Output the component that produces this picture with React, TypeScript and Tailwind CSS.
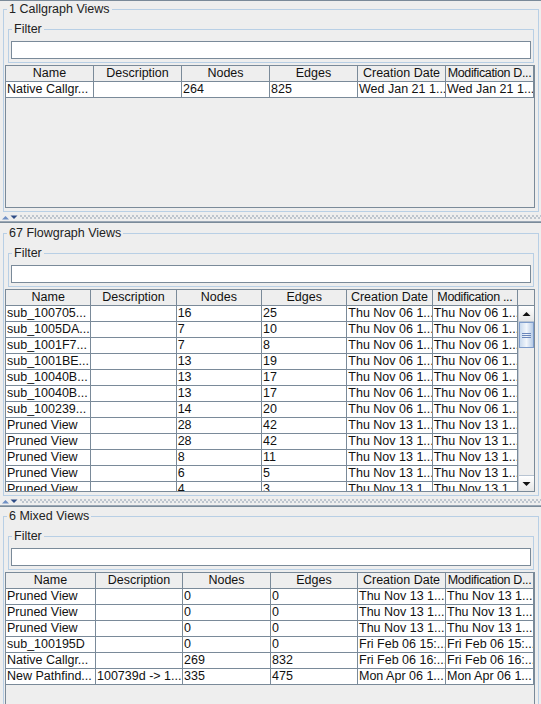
import React from "react";

type Row = string[];

const headers = ["Name", "Description", "Nodes", "Edges", "Creation Date", "Modification D..."];
const flowHeaders = ["Name", "Description", "Nodes", "Edges", "Creation Date", "Modification ..."];

const callgraphRows: Row[] = [
  ["Native Callgr...", "", "264", "825", "Wed Jan 21 1...", "Wed Jan 21 1..."],
];

const nov06 = "Thu Nov 06 1...";
const nov13 = "Thu Nov 13 1...";

const flowgraphRows: Row[] = [
  ["sub_100705...", "", "16", "25", nov06, nov06],
  ["sub_1005DA...", "", "7", "10", nov06, nov06],
  ["sub_1001F7...", "", "7", "8", nov06, nov06],
  ["sub_1001BE...", "", "13", "19", nov06, nov06],
  ["sub_10040B...", "", "13", "17", nov06, nov06],
  ["sub_10040B...", "", "13", "17", nov06, nov06],
  ["sub_100239...", "", "14", "20", nov06, nov06],
  ["Pruned View", "", "28", "42", nov13, nov13],
  ["Pruned View", "", "28", "42", nov13, nov13],
  ["Pruned View", "", "8", "11", nov13, nov13],
  ["Pruned View", "", "6", "5", nov13, nov13],
  ["Pruned View", "", "4", "3", nov13, nov13],
  ["Pruned View", "", "4", "3", nov13, nov13],
];

const mixedRows: Row[] = [
  ["Pruned View", "", "0", "0", nov13, nov13],
  ["Pruned View", "", "0", "0", nov13, nov13],
  ["Pruned View", "", "0", "0", nov13, nov13],
  ["sub_100195D", "", "0", "0", "Fri Feb 06 15:...", "Fri Feb 06 15:..."],
  ["Native Callgr...", "", "269", "832", "Fri Feb 06 16:...", "Fri Feb 06 16:..."],
  ["New Pathfind...", "100739d -> 1...", "335", "475", "Mon Apr 06 1...", "Mon Apr 06 1..."],
];

const TitledBox: React.FC<{ title: string; className?: string; children: React.ReactNode }> = ({
  title,
  className = "",
  children,
}) => (
  <fieldset className={`border border-[#b8cfe5] ${className}`}>
    <legend className="ml-[3px] px-[2px] leading-[14px] text-[#222]">{title}</legend>
    {children}
  </fieldset>
);

const HeaderRow: React.FC<{ labels: string[]; cols: string }> = ({ labels, cols }) => (
  <div className={`grid ${cols} bg-[#eeeeee]`}>
    {labels.map((h, i) => (
      <div
        key={i}
        className={`h-[16px] overflow-hidden whitespace-nowrap border-r border-b border-[#7a8a99] text-center leading-[15px] ${
          h.endsWith("...") ? "tracking-[-0.35px]" : ""
        }`}
      >
        {h}
      </div>
    ))}
  </div>
);

const BodyRows: React.FC<{ rows: Row[]; cols: string }> = ({ rows, cols }) => (
  <div>
    {rows.map((r, i) => (
      <div key={i} className={`grid ${cols} bg-white`}>
        {r.map((c, j) => (
          <div
            key={j}
            className="h-[16px] overflow-hidden whitespace-nowrap border-r border-b border-[#7a8a99] pl-[1px] leading-[15px]"
          >
            {c}
          </div>
        ))}
      </div>
    ))}
  </div>
);

const ScrollBar: React.FC = () => (
  <div className="flex w-[16px] flex-col bg-[#eeeeee] border-l border-[#c4ccd6]">
    <div className="flex h-[16px] items-center justify-center border-b border-[#b8c4d2] bg-linear-to-b from-white to-[#e6e6e6]">
      <svg width="9" height="6" viewBox="0 0 9 6">
        <polygon points="0.5,5 4.5,1 8.5,5" fill="#111" />
      </svg>
    </div>
    <div className="flex-1">
      <div className="flex h-[26px] flex-col items-center justify-center gap-[1px] border border-[#7e9ccb] bg-linear-to-r from-[#c9daee] via-[#f2f6fb] to-[#b6cbe6]">
        <div className="h-[1px] w-[9px] bg-[#6a86ba]" />
        <div className="h-[1px] w-[9px] bg-[#6a86ba]" />
        <div className="h-[1px] w-[9px] bg-[#6a86ba]" />
      </div>
    </div>
    <div className="flex h-[16px] items-center justify-center border-t border-[#b8c4d2] bg-linear-to-b from-white to-[#e6e6e6]">
      <svg width="9" height="6" viewBox="0 0 9 6">
        <polygon points="0.5,1 8.5,1 4.5,5" fill="#111" />
      </svg>
    </div>
  </div>
);

const ViewsPanel: React.FC<{
  title: string;
  top: string;
  paneHeight: string;
  children: React.ReactNode;
}> = ({ title, top, paneHeight, children }) => (
  <div className="border-t border-[#7a8a99]">
    <TitledBox title={title} className={`ml-[3px] mr-[2px] mb-[1px] pb-[3px] ${top}`}>
      <TitledBox title="Filter" className="mx-[4px] mt-[6px] pb-[3px]">
        <div className="mx-[2px] mt-[5px] h-[18px] border border-[#7a8a99] bg-white" />
      </TitledBox>
      <div className={`ml-[1px] mr-[3px] mt-[2px] overflow-hidden border border-[#7a8a99] bg-[#eeeeee] ${paneHeight}`}>
        {children}
      </div>
    </TitledBox>
  </div>
);

const Divider: React.FC = () => (
  <div className="flex h-[9px] items-center border-b border-[#9aa7b5]">
    <svg width="20" height="9" viewBox="0 0 20 9" className="shrink-0">
      <polygon points="2,6.5 5.5,3 9,6.5" fill="#6f8fc4" />
      <polygon points="10.5,2.5 17.5,2.5 14,6" fill="#2f4c86" />
    </svg>
    <div className="h-[4px] flex-1 bg-[radial-gradient(circle_at_1px_1px,#a3afbd_0.6px,transparent_0.9px),radial-gradient(circle_at_3px_3px,#a3afbd_0.6px,transparent_0.9px)] bg-[length:4px_4px]" />
  </div>
);

export default function App() {
  return (
    <div className="h-[704px] w-[541px] overflow-hidden bg-[#eeeeee] font-['Liberation_Sans',Arial,sans-serif] text-[12.5px] text-[#111]">
      <ViewsPanel title="1 Callgraph Views" top="mt-[1px]" paneHeight="h-[143px]">
        <HeaderRow labels={headers} cols="grid-cols-6" />
        <BodyRows rows={callgraphRows} cols="grid-cols-6" />
      </ViewsPanel>
      <Divider />
      <ViewsPanel title="67 Flowgraph Views" top="mt-[3px]" paneHeight="h-[203px]">
        <div className="flex h-full flex-col">
          <div className="flex">
            <div className="flex-1">
              <HeaderRow labels={flowHeaders} cols="grid-cols-6" />
            </div>
            <div className="h-[16px] w-[16px] border-b border-[#7a8a99] bg-[#eeeeee]" />
          </div>
          <div className="flex min-h-0 flex-1">
            <div className="flex-1 overflow-hidden">
              <BodyRows rows={flowgraphRows} cols="grid-cols-6" />
            </div>
            <ScrollBar />
          </div>
        </div>
      </ViewsPanel>
      <Divider />
      <ViewsPanel title="6 Mixed Views" top="mt-[2px]" paneHeight="h-[160px]">
        <HeaderRow labels={headers} cols="grid-cols-[90px_87px_88px_87px_88px_88px]" />
        <BodyRows rows={mixedRows} cols="grid-cols-[90px_87px_88px_87px_88px_88px]" />
      </ViewsPanel>
    </div>
  );
}
